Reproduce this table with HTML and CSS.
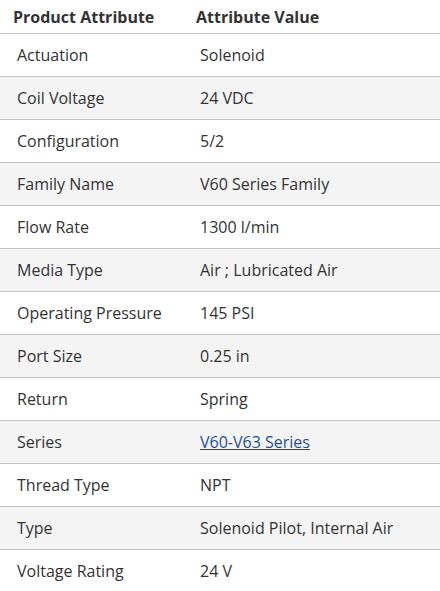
FILE: index.html
```html
<!DOCTYPE html>
<html>
<head>
<meta charset="utf-8">
<link rel="stylesheet" href="styles.css">
</head>
<body>
<table class="attrs">
  <thead>
    <tr><th class="c1">Product Attribute</th><th>Attribute Value</th></tr>
  </thead>
  <tbody>
    <tr><td>Actuation</td><td>Solenoid</td></tr>
    <tr><td>Coil Voltage</td><td>24 VDC</td></tr>
    <tr><td>Configuration</td><td>5/2</td></tr>
    <tr><td>Family Name</td><td>V60 Series Family</td></tr>
    <tr><td>Flow Rate</td><td>1300 l/min</td></tr>
    <tr><td>Media Type</td><td>Air ; Lubricated Air</td></tr>
    <tr><td>Operating Pressure</td><td>145 PSI</td></tr>
    <tr><td>Port Size</td><td>0.25 in</td></tr>
    <tr><td>Return</td><td>Spring</td></tr>
    <tr><td>Series</td><td><a href="#" class="link">V60-V63 Series</a></td></tr>
    <tr><td>Thread Type</td><td>NPT</td></tr>
    <tr><td>Type</td><td>Solenoid Pilot, Internal Air</td></tr>
    <tr><td>Voltage Rating</td><td>24 V</td></tr>
  </tbody>
</table>
</body>
</html>
```
FILE: styles.css
```css
html, body {
  margin: 0;
  padding: 0;
  background: #fff;
}
body {
  font-family: "Open Sans", "Noto Sans", sans-serif;
  font-size: 16px;
  color: #333;
}
.attrs {
  width: 440px;
  border-collapse: collapse;
  table-layout: fixed;
}
.attrs th {
  text-align: left;
  font-weight: 700;
  height: 33px;
  padding: 0 0 0 13px;
  color: #333;
  border-bottom: 1px solid #c4c4c4;
  vertical-align: middle;
}
.attrs th.c1 {
  width: 170px;
}
.attrs td {
  height: 42px;
  padding: 0 0 0 17px;
  border-bottom: 1px solid #c4c4c4;
  vertical-align: middle;
}
.attrs tbody tr:nth-child(even) td {
  background: #f4f4f4;
}
.attrs tbody tr:last-child td {
  border-bottom: none;
}
.link {
  color: #1b4ea3;
  text-decoration: underline;
}
```
